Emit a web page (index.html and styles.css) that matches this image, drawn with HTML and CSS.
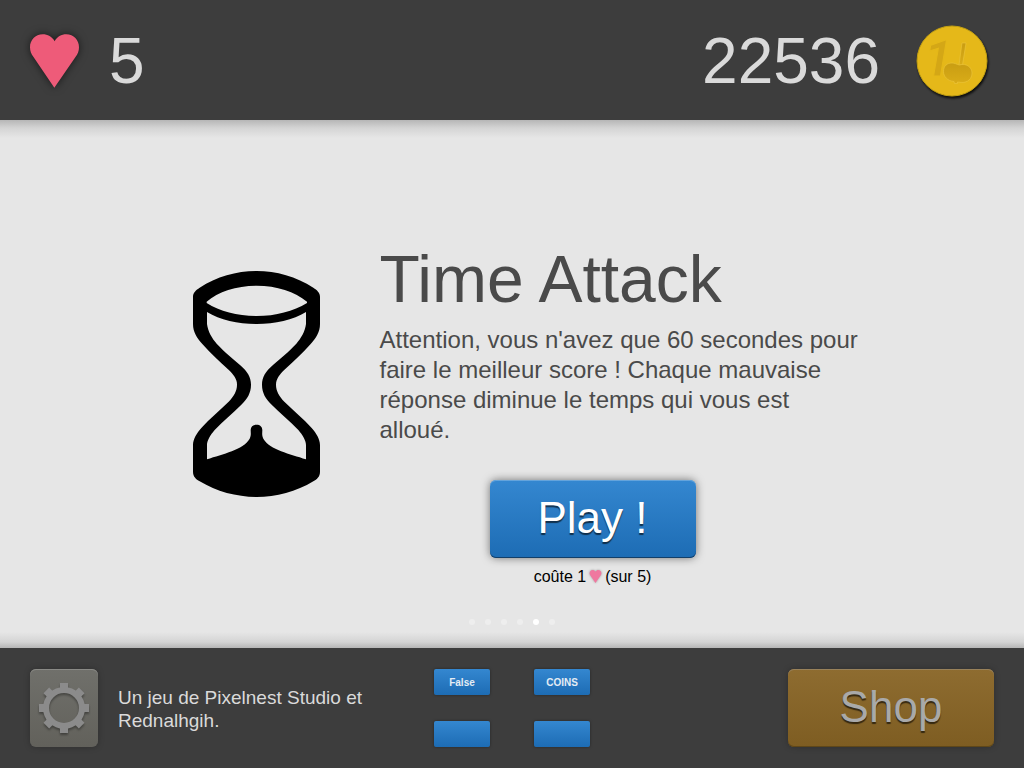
FILE: index.html
```html
<!DOCTYPE html>
<html lang="fr">
<head>
<meta charset="utf-8">
<meta name="viewport" content="width=device-width, initial-scale=1">
<title>Time Attack</title>
<link rel="stylesheet" href="styles.css">
</head>
<body>
<svg width="0" height="0" class="defs" aria-hidden="true">
  <symbol id="heart" viewBox="90 101 147 161">
    <path d="M164 122C156 108 143 101 128 101C106 101 90 118 90 140C90 152 94 160 100 169L163 262L227 169C233 160 237 152 237 140C237 118 221 101 199 101C184 101 171 108 164 122Z"/>
  </symbol>
</svg>

<header class="bar top">
  <div class="lives">
    <svg class="heart" aria-hidden="true"><use href="#heart"/></svg>
    <span>5</span>
  </div>
  <div class="score">
    <span>22536</span>
    <svg class="coin" viewBox="0 0 72 72" aria-hidden="true">
      <defs>
        <linearGradient id="engraved" x1="0" y1="0" x2="0" y2="1">
          <stop offset="0" stop-color="#c99d12"/>
          <stop offset="1" stop-color="#d9ac18"/>
        </linearGradient>
      </defs>
      <circle cx="36" cy="36" r="35" fill="#e5b819" stroke="#c2a013"/>
      <text class="coin-digit" x="8" y="51">1</text>
      <g fill="url(#engraved)" stroke="#edc63c" stroke-width="0.6">
        <path d="M46 18L50 18L46.500 40L43 40Z"/>
        <path d="M27.500 46.500C27.500 41 31 38 36 38C39 38 40.500 39.500 43.500 40C50 38 56 42 56 48C56 54 51.500 57.500 46 57.500L41.500 57L41.500 58.500L38.500 58.500L38 56.500C31.500 56 27.500 51.500 27.500 46.500Z"/>
      </g>
    </svg>
  </div>
</header>

<main class="stage">
  <section class="mode">
    <svg class="hourglass" viewBox="69 63 381 678" aria-hidden="true">
      <path fill-rule="evenodd" d="M69 140C69 128 78 120 89 113C140 80 200 63 259.500 63C319 63 379 80 430 113C441 120 450 128 450 140L450 222C450 246 438 264 422 282C395 312 368 336 345 358C327 375 318 388 318 404C318 422 327 438 343 455C372 483 400 506 425 534C439 550 450 568 450 585L450 665C450 680 441 687 430 694C379 725 319 741 259.500 741C200 741 140 725 89 694C78 687 69 680 69 665L69 585C69 568 80 550 94 534C119 506 147 483 176 455C192 438 201 422 201 404C201 388 192 375 174 358C151 336 124 312 97 282C81 264 69 246 69 222Z
      M110 155C145 125 200 107 260 107C320 107 375 125 411 155L411 159C370 184 318 198 260 198C202 198 150 184 110 159Z
      M111 186C150 210 205 222 260 222C315 222 370 210 408 186L408 222C405 245 393 265 379 281C355 307 333 323 309 345C286 365 276 382 276 404C276 428 287 447 305 464C330 490 360 512 385 540C398 555 408 572 408 585L408 628C360 611 300 600 280 566C275 556 277 548 277 540C277 530 270 524 260 524C249 524 242 530 242 540C242 548 244 556 239 566C219 600 159 611 111 628L111 585C111 572 121 555 134 540C159 512 189 490 214 464C232 447 243 428 243 404C243 382 233 365 210 345C186 323 164 307 140 281C126 265 114 245 111 222Z"/>
    </svg>
    <div class="details">
      <h1>Time Attack</h1>
      <p class="description">Attention, vous n'avez que 60 secondes pour faire le meilleur score ! Chaque mauvaise réponse diminue le temps qui vous est alloué.</p>
      <div class="action">
        <button type="button" class="button play">Play !</button>
        <p class="cost"><span>coûte 1</span><svg class="mini-heart" aria-hidden="true"><use href="#heart"/></svg><span>(sur 5)</span></p>
      </div>
    </div>
  </section>
  <ol class="pager" aria-label="Modes de jeu">
    <li></li><li></li><li></li><li></li><li class="current" aria-current="page"></li><li></li>
  </ol>
</main>

<footer class="bar bottom">
  <button type="button" class="button settings" aria-label="Réglages">
    <svg class="gear" viewBox="-25 -25 50 50" aria-hidden="true">
      <circle r="18" fill="none" stroke="#8b8b8b" stroke-width="6"/>
      <g fill="#8b8b8b">
        <path d="M-4-25H4V-19H-4ZM-4 19H4V25H-4ZM-25-4H-19V4H-25ZM19-4H25V4H19Z"/>
        <path transform="rotate(45)" d="M-4-25H4V-19H-4ZM-4 19H4V25H-4ZM-25-4H-19V4H-25ZM19-4H25V4H19Z"/>
      </g>
    </svg>
  </button>
  <p class="credits">Un jeu de Pixelnest Studio et Rednalhgih.</p>
  <div class="debug">
    <button type="button" class="button small">False</button>
    <button type="button" class="button small">COINS</button>
    <button type="button" class="button small" aria-label="Option 3"></button>
    <button type="button" class="button small" aria-label="Option 4"></button>
  </div>
  <button type="button" class="button shop">Shop</button>
</footer>
</body>
</html>
```

FILE: styles.css
```css
* {
  box-sizing: border-box;
}

body {
  margin: 0;
  min-height: 100vh;
  display: flex;
  flex-direction: column;
  background: #e6e6e6;
  color: #4a4a4a;
  font-family: "Liberation Sans", Arial, sans-serif;
}

h1,
p,
ol {
  margin: 0;
  padding: 0;
}

h1 {
  font-size: 66px;
  line-height: 72px;
  font-weight: 400;
}

.defs {
  position: absolute;
}

.bar {
  display: flex;
  align-items: center;
  min-height: 120px;
  background: #3d3d3d;
  color: #dadada;
}

.top {
  justify-content: space-between;
  padding: 2px 36px 0 30px;
  font-size: 64px;
  line-height: 72px;
}

.lives,
.score {
  display: flex;
  align-items: center;
}

.lives {
  gap: 30px;
}

.score {
  gap: 36px;
}

.heart {
  width: 49px;
  height: 54px;
  fill: #ee5b79;
  overflow: visible;
  filter: drop-shadow(0 0 4px rgba(0, 0, 0, 0.6));
}

.coin {
  width: 72px;
  height: 72px;
  overflow: visible;
  filter: drop-shadow(1px 2px 1px rgba(0, 0, 0, 0.8));
}

.coin-digit {
  font-family: Roboto, sans-serif;
  font-size: 50px;
  font-style: italic;
  font-weight: 700;
  fill: #d4a716;
  stroke: #e5b819;
  stroke-width: 1px;
}

.stage {
  flex: 1;
  display: flex;
  flex-direction: column;
  padding-bottom: 23px;
  background:
    linear-gradient(#b6b6b6, #d4d4d4 8px, rgba(230, 230, 230, 0) 18px) top / 100% 18px no-repeat,
    linear-gradient(to top, #b6b6b6, #d4d4d4 6px, rgba(230, 230, 230, 0) 16px) bottom / 100% 16px no-repeat,
    #e6e6e6;
}

.mode {
  flex: 1;
  display: flex;
  align-items: center;
  justify-content: center;
  gap: 60px;
  padding: 89px 0 0 32px;
}

.hourglass {
  flex: none;
  width: 127px;
  height: 226px;
  margin-bottom: 60px;
}

.details {
  max-width: 488px;
}

.description {
  max-width: 484px;
  margin-top: 10px;
  font-size: 24px;
  line-height: 30px;
}

.action {
  display: inline-flex;
  flex-direction: column;
  align-items: center;
  gap: 10px;
  margin: 35px 0 0 110px;
}

.cost {
  display: flex;
  align-items: center;
  gap: 3px;
  color: #000;
  font-size: 16px;
  line-height: 18px;
}

.mini-heart {
  width: 13px;
  height: 13px;
  fill: #ef789f;
  overflow: visible;
  filter: drop-shadow(0 0 1px rgba(0, 0, 0, 0.3));
}

.pager {
  display: flex;
  justify-content: center;
  gap: 10px;
  list-style: none;
}

.pager li {
  width: 6px;
  height: 6px;
  border-radius: 50%;
  background: #eeeeee;
}

.pager .current {
  background: #fff;
}

.button {
  display: flex;
  align-items: center;
  justify-content: center;
  padding: 0;
  border: 0;
  border-radius: 6px;
  background: linear-gradient(#3487d0, #1d6cb4);
  color: #fff;
  font-family: inherit;
  cursor: pointer;
}

.play,
.shop {
  width: 206px;
  height: 78px;
  padding-bottom: 2px;
  font-size: 44px;
  line-height: 50px;
}

.play {
  text-shadow: 0 2px 1px rgba(0, 0, 0, 0.6);
  box-shadow:
    inset 0 1px #64a4dc,
    inset 0 -1px #123f69,
    0 0 8px rgba(0, 0, 0, 0.5);
}

.bottom {
  padding: 0 30px;
}

.settings {
  flex: none;
  width: 68px;
  height: 78px;
  background: linear-gradient(#70706b, #62615b);
  box-shadow:
    inset 0 1px #8a8a86,
    0 0 6px rgba(0, 0, 0, 0.25);
}

.gear {
  width: 50px;
  height: 50px;
  overflow: visible;
  filter: drop-shadow(0 2px 1px rgba(0, 0, 0, 0.35));
}

.credits {
  width: 260px;
  margin: 0 56px 0 20px;
  padding-top: 2px;
  font-size: 19px;
  line-height: 23px;
}

.debug {
  display: grid;
  grid-template-columns: auto auto;
  gap: 26px 44px;
}

.small {
  width: 56px;
  height: 26px;
  border-radius: 2px;
  color: #e4ecf4;
  font-size: 10px;
  font-weight: 700;
  box-shadow: 0 0 3px rgba(0, 0, 0, 0.4);
}

.shop {
  flex: none;
  margin-left: auto;
  background: linear-gradient(#8e6c30, #7e5d22);
  color: #a9a9a9;
  text-shadow: 0 2px 1px rgba(0, 0, 0, 0.6);
  box-shadow:
    inset 0 1px #98815a,
    inset 0 -1px #5f4719,
    0 0 6px rgba(0, 0, 0, 0.25);
}
```
